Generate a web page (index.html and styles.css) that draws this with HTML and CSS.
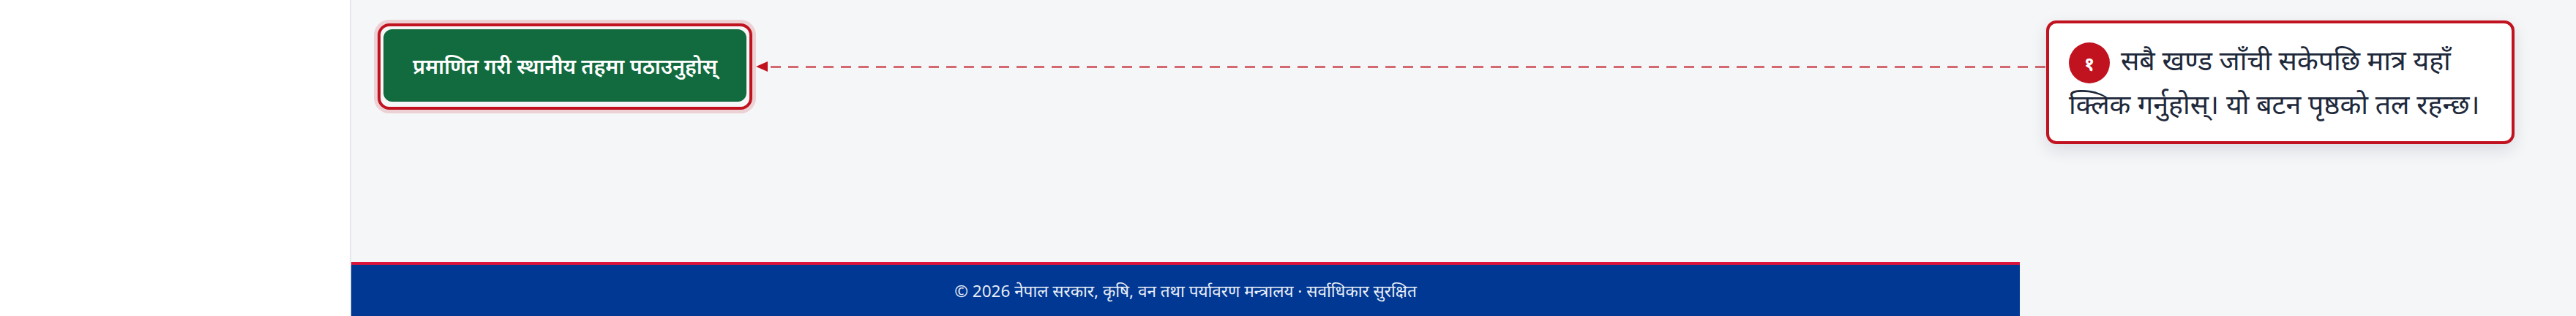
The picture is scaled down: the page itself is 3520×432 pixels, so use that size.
FILE: index.html
```html
<!DOCTYPE html>
<html lang="ne">
<head>
<meta charset="utf-8">
<title>प्रमाणित गरी पठाउनुहोस्</title>
<link rel="stylesheet" href="styles.css">
</head>
<body>
<div class="app">
  <aside class="sidebar"></aside>
  <div class="main">
    <div class="content">
      <div class="highlight">
        <button class="submit" type="button">प्रमाणित गरी स्थानीय तहमा पठाउनुहोस्</button>
      </div>
    </div>
    <footer class="footer">© 2026 नेपाल सरकार, कृषि, वन तथा पर्यावरण मन्त्रालय · सर्वाधिकार सुरक्षित</footer>
  </div>
</div>
<div class="connector">
  <span class="arrow"></span>
  <span class="dash"></span>
</div>
<div class="callout">
  <p class="callout-text"><span class="badge">१</span>सबै खण्ड जाँची सकेपछि मात्र यहाँ क्लिक गर्नुहोस्। यो बटन पृष्ठको तल रहन्छ।</p>
</div>
</body>
</html>
```
FILE: styles.css
```css
* { box-sizing: border-box; }
html, body { margin: 0; padding: 0; }
body {
  width: 3520px;
  height: 432px;
  overflow: hidden;
  background: #f5f6f8;
  font-family: "Noto Sans", "Noto Sans Devanagari", sans-serif;
  position: relative;
}
.app {
  display: grid;
  grid-template-columns: 480px 2280px;
  height: 432px;
}
.sidebar {
  background: #ffffff;
  border-right: 2px solid #e5e7eb;
}
.main {
  display: flex;
  flex-direction: column;
}
.content {
  flex: 1;
  padding: 32px 0 0 36px;
}
.highlight {
  display: inline-block;
  border: 4px solid #c1121f;
  border-radius: 16px;
  padding: 4px 4px 7px 4px;
  box-shadow: 0 0 0 5px rgba(193, 18, 31, 0.16);
}
.submit {
  display: flex;
  align-items: center;
  justify-content: center;
  height: 99px;
  width: 496px;
  padding: 0;
  border: 0;
  border-radius: 12px;
  background: #116b3e;
  color: #ffffff;
  font-family: "Noto Sans", "Noto Sans Devanagari", sans-serif;
  font-size: 28.5px;
  font-weight: 600;
}
.footer {
  height: 74px;
  border-top: 4px solid #dc143c;
  background: #003893;
  color: #e8edf7;
  font-size: 22.5px;
  display: flex;
  align-items: center;
  justify-content: center;
}
.connector {
  position: absolute;
  left: 1033px;
  top: 84px;
  width: 1763px;
  height: 14px;
  display: flex;
  align-items: center;
}
.arrow {
  width: 0;
  height: 0;
  border-top: 7px solid transparent;
  border-bottom: 7px solid transparent;
  border-right: 16px solid #c1121f;
  flex: none;
}
.dash {
  flex: 1;
  margin-left: 4px;
  height: 3px;
  background: repeating-linear-gradient(to right, rgba(193, 18, 31, 0.62) 0 14px, transparent 14px 24px);
}
.callout {
  position: absolute;
  left: 2796px;
  top: 28px;
  width: 640px;
  height: 169px;
  background: #ffffff;
  border: 4px solid #c1121f;
  border-radius: 14px;
  box-shadow: 0 8px 22px rgba(15, 23, 42, 0.12);
  padding: 22px 12px 0 27px;
}
.callout-text {
  margin: 0;
  color: #1e293b;
  font-size: 37.5px;
  line-height: 55px;
}
.badge {
  display: inline-flex;
  align-items: center;
  justify-content: center;
  width: 56px;
  height: 56px;
  border-radius: 50%;
  background: #c1121f;
  color: #ffffff;
  font-size: 26px;
  font-weight: 700;
  vertical-align: middle;
  margin-right: 15px;
  line-height: 1;
}
```
